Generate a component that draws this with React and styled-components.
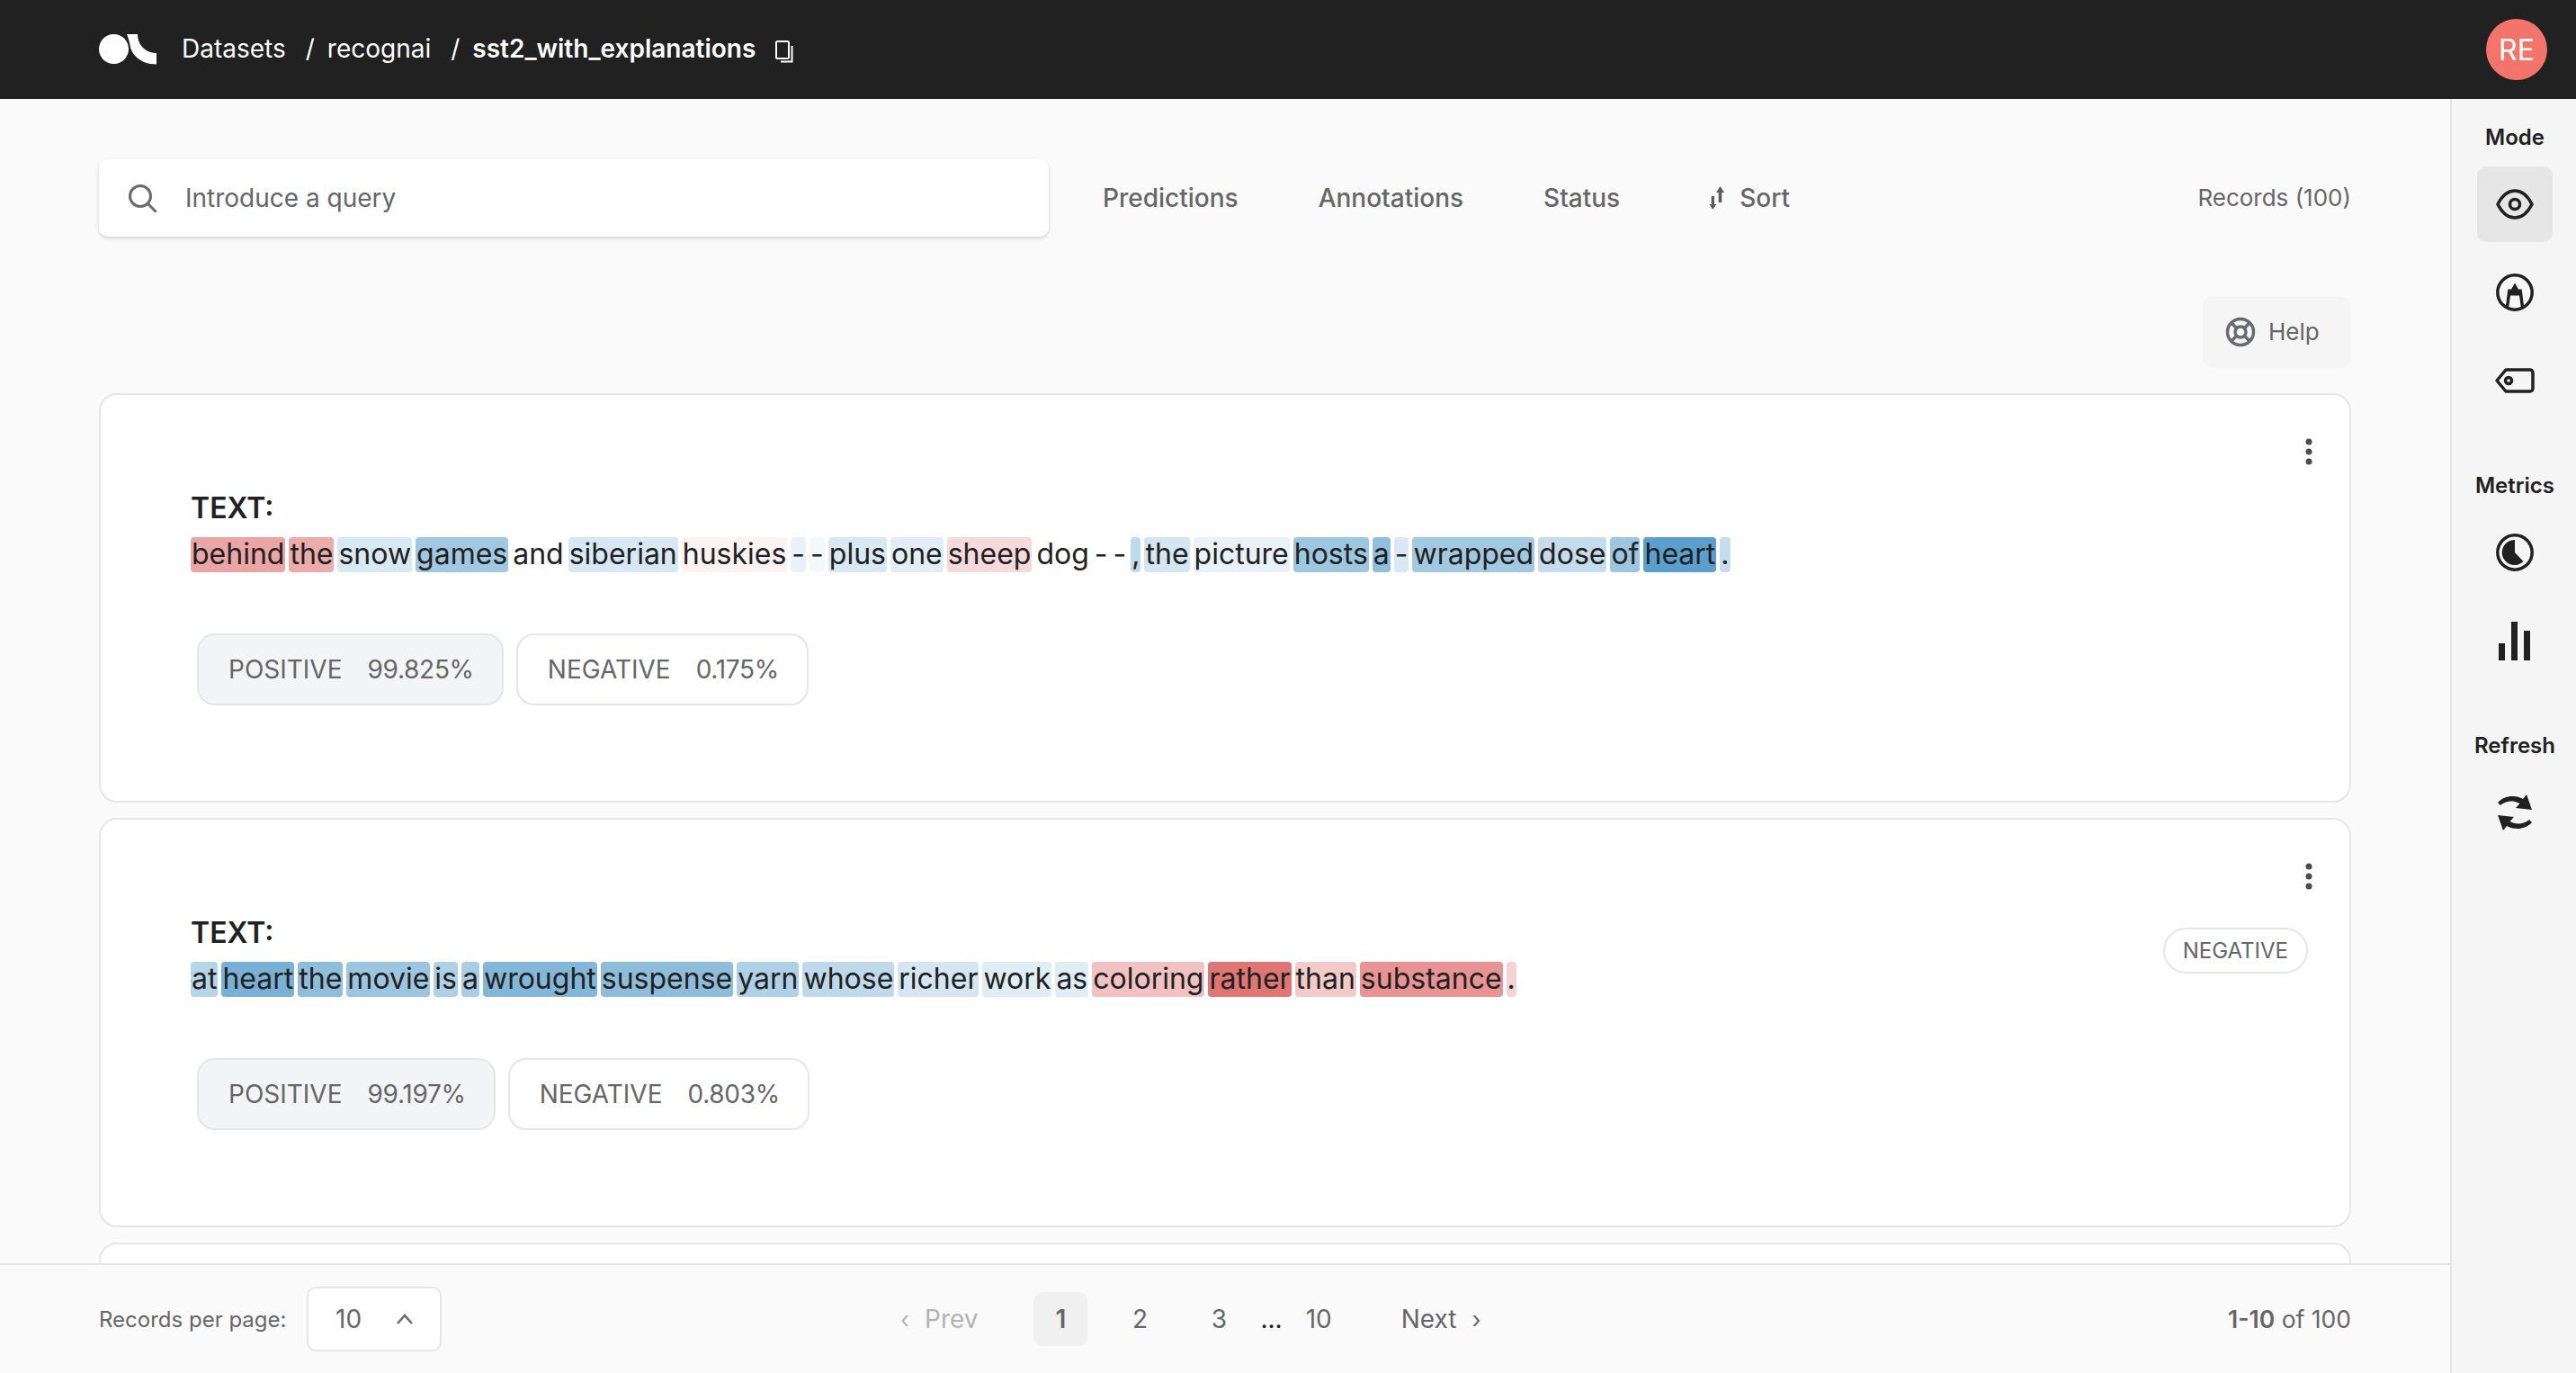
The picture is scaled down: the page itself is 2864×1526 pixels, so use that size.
import React from "react";
import styled, { createGlobalStyle } from "styled-components";

const records = [
  {
    tokens: [
      ["behind", "#eba5a5"], ["the", "#edabab"], ["snow", "#d7e9f3"], ["games", "#a0c8e2"], ["and"],
      ["siberian", "#d6e8f3"], ["huskies", "#fcf2f2"], ["-", "#e9f2f9"], ["-", "#f3f8fb"], ["plus", "#d7e9f3"],
      ["one", "#e1eef5"], ["sheep", "#f6d9da"], ["dog"], ["-"], ["-"], [",", "#bfdaeb"], ["the", "#d3e6f2"],
      ["picture", "#e9f2f9"], ["hosts", "#9cc7e1"], ["a", "#8fbfdc"], ["-", "#d8e9f3"], ["wrapped", "#a2c9e2"],
      ["dose", "#c5dcec"], ["of", "#9dc7e1"], ["heart", "#5a9fcd"], [".", "#c5dcec"],
    ],
    scores: [["POSITIVE", "99.825%"], ["NEGATIVE", "0.175%"]],
  },
  {
    annotation: "NEGATIVE",
    tokens: [
      ["at", "#b6d5e9"], ["heart", "#79b1d6"], ["the", "#8fbedc"], ["movie", "#9cc6e0"], ["is", "#aed1e6"],
      ["a", "#a8cde5"], ["wrought", "#83b7da"], ["suspense", "#8dbddb"], ["yarn", "#aed1e7"], ["whose", "#bdd9eb"],
      ["richer", "#d3e6f2"], ["work", "#dfedf5"], ["as", "#dfedf5"], ["coloring", "#f2c2c2"], ["rather", "#e07674"],
      ["than", "#f3caca"], ["substance", "#e89494"], [".", "#f5d3d5"],
    ],
    scores: [["POSITIVE", "99.197%"], ["NEGATIVE", "0.803%"]],
  },
];

const Logo = () => (
  <svg width="64" height="34" viewBox="110 37 64 34" fill="#fff">
    <ellipse cx="126.5" cy="53.5" rx="16.5" ry="16.5" />
    <path d="M141 37h12c0 12 9 21 21 21v12.5c-18 0-27-11-29-19-1-5-2-10-4-14.5z" />
  </svg>
);

const CopyIcon = () => (
  <svg width="22" height="26" viewBox="0 0 22 26" fill="none" stroke="#fff" strokeWidth="2">
    <rect x="2" y="2" width="14" height="19" rx="1.5" />
    <path d="M19.500 7v17.500H7" />
  </svg>
);

const SearchIcon = () => (
  <svg width="32" height="32" viewBox="0 0 32 32" fill="none" stroke="#686a6d" strokeWidth="3">
    <circle cx="14" cy="14" r="11.500" />
    <path d="M22.500 22.500L31 31" strokeLinecap="round" />
  </svg>
);

const SortIcon = () => (
  <svg width="18" height="26" viewBox="0 0 18 26" fill="#5c5c5c">
    <path d="M12.500 0l4.500 7h-2.700v11h-3.600V7H8z" />
    <path d="M2.700 11h3.300v9h2.300l-3.900 6L.5 20h2.200z" />
  </svg>
);

const HelpIcon = () => (
  <svg width="34" height="34" viewBox="0 0 34 34" fill="none" stroke="#686a6d" strokeWidth="3.500">
    <circle cx="17" cy="17" r="14.500" />
    <circle cx="17" cy="17" r="6" />
    <path d="M6.500 6.500l6.200 6.200M27.500 6.500l-6.200 6.200M6.500 27.500l6.200-6.200M27.500 27.500l-6.200-6.200" />
  </svg>
);

const DotsIcon = () => (
  <svg width="8" height="30" viewBox="0 0 8 30" fill="#4c4c4c">
    <circle cx="4" cy="4" r="3.500" />
    <circle cx="4" cy="15" r="3.500" />
    <circle cx="4" cy="26" r="3.500" />
  </svg>
);

const EyeIcon = () => (
  <svg width="42" height="34" viewBox="0 0 42 34" fill="none" stroke="#212121" strokeWidth="3.500">
    <path d="M2 17C7 7 14 2 21 2s14 5 19 15c-5 10-12 15-19 15S7 27 2 17z" />
    <circle cx="21" cy="17" r="5.500" />
  </svg>
);

const PenIcon = () => (
  <svg width="42" height="42" viewBox="0 0 42 42" fill="none">
    <circle cx="21" cy="21" r="19.200" stroke="#212121" strokeWidth="3.500" />
    <path d="M21 10.500l4 7h3.700l2.300 18.500-3.200 1.500-1.800-13H16l-1.800 13-3.200-1.500 2.300-18.500H17z" fill="#212121" />
  </svg>
);

const TagIcon = () => (
  <svg width="44" height="28" viewBox="0 0 44 28" fill="none" stroke="#212121" strokeWidth="3.500">
    <path d="M12 2h27a3 3 0 0 1 3 3v18a3 3 0 0 1-3 3H12L2 14z" strokeLinejoin="round" />
    <circle cx="15" cy="14" r="3.500" />
  </svg>
);

const PieIcon = () => (
  <svg width="42" height="42" viewBox="0 0 42 42">
    <circle cx="21" cy="21" r="19.200" fill="none" stroke="#212121" strokeWidth="3.500" />
    <path d="M21 7v14l9.500 10A14 14 0 1 1 21 7z" fill="#212121" />
  </svg>
);

const BarsIcon = () => (
  <svg width="36" height="43" viewBox="0 0 36 43" fill="#212121">
    <rect x="0" y="24" width="7" height="19" />
    <rect x="14" y="0" width="7" height="43" />
    <rect x="28" y="10" width="7" height="33" />
  </svg>
);

const RefreshIcon = () => (
  <svg width="40" height="42" viewBox="0 0 40 42" fill="#212121">
    <path d="M1 10C8 2 20 1 29 6l4-5 6 17-18-2 4.500-5C18 7 10 8 4 13z" />
    <path d="M39 32c-7 8-19 9-28 4l-4 5-6-17 18 2-4.500 5C22 35 30 34 36 29z" />
  </svg>
);

const ChevronUp = () => (
  <svg width="20" height="14" viewBox="0 0 20 14" fill="none" stroke="#686a6d" strokeWidth="2.500">
    <path d="M2 12l8-9 8 9" />
  </svg>
);

const App = () => {
  return (
    <Page>
      <GlobalStyle />
      <Header>
        <Logo />
        <Crumbs>
          <Crumb>Datasets</Crumb>
          <Sep>/</Sep>
          <Crumb>recognai</Crumb>
          <Sep>/</Sep>
          <Crumb $current>sst2_with_explanations</Crumb>
          <CopyButton>
            <CopyIcon />
          </CopyButton>
        </Crumbs>
        <Avatar>RE</Avatar>
      </Header>
      <Body>
        <Main>
          <Content>
            <Toolbar>
              <Search>
                <SearchIcon />
                <Placeholder>Introduce a query</Placeholder>
              </Search>
              <Filters>
                <Filter>Predictions</Filter>
                <Filter>Annotations</Filter>
                <Filter>Status</Filter>
                <SortFilter>
                  <SortIcon />
                  Sort
                </SortFilter>
              </Filters>
              <Count>Records (100)</Count>
            </Toolbar>
            <HelpRow>
              <HelpButton>
                <HelpIcon />
                Help
              </HelpButton>
            </HelpRow>
            <Cards>
              {records.map((record, index) => (
                <Card key={index}>
                  <Menu>
                    <DotsIcon />
                  </Menu>
                  {record.annotation && <Annotation>{record.annotation}</Annotation>}
                  <FieldName>TEXT:</FieldName>
                  <Tokens>
                    {record.tokens.map(([word, color], i) => (
                      <Token key={i} $color={color}>
                        {word}
                      </Token>
                    ))}
                  </Tokens>
                  <Scores>
                    {record.scores.map(([label, value], i) => (
                      <Score key={label} $top={i === 0}>
                        <span>{label}</span>
                        <ScoreValue>{value}</ScoreValue>
                      </Score>
                    ))}
                  </Scores>
                </Card>
              ))}
              <Card />
            </Cards>
          </Content>
          <Footer>
            <PerPage>
              Records per page:
              <PerPageSelect>
                10
                <ChevronUp />
              </PerPageSelect>
            </PerPage>
            <Pager>
              <PagerLink $disabled>
                <Arrow>‹</Arrow> Prev
              </PagerLink>
              <PageNumbers>
                <PageNumber $active>1</PageNumber>
                <PageNumber>2</PageNumber>
                <PageNumber>3</PageNumber>
                <Ellipsis>...</Ellipsis>
                <span>10</span>
              </PageNumbers>
              <PagerLink>
                Next <Arrow>›</Arrow>
              </PagerLink>
            </Pager>
            <Range>
              <strong>1-10</strong> of 100
            </Range>
          </Footer>
        </Main>
        <Sidebar>
          <SideGroup>
            <SideTitle>Mode</SideTitle>
            <SideButton $active>
              <EyeIcon />
            </SideButton>
            <SideButton>
              <PenIcon />
            </SideButton>
            <SideButton>
              <TagIcon />
            </SideButton>
          </SideGroup>
          <SideGroup>
            <SideTitle>Metrics</SideTitle>
            <SideButton>
              <PieIcon />
            </SideButton>
            <SideButton>
              <BarsIcon />
            </SideButton>
          </SideGroup>
          <SideGroup>
            <SideTitle>Refresh</SideTitle>
            <SideButton>
              <RefreshIcon />
            </SideButton>
          </SideGroup>
        </Sidebar>
      </Body>
    </Page>
  );
};

export default App;

const GlobalStyle = createGlobalStyle`
  html, body {
    margin: 0;
    padding: 0;
    overflow: hidden;
  }
  * {
    box-sizing: border-box;
  }
`;

const Page = styled.div`
  width: 2864px;
  height: 1526px;
  display: flex;
  flex-direction: column;
  overflow: hidden;
  background: #fafafa;
  color: #212121;
  font-family: Inter, "Liberation Sans", sans-serif;
`;

const Header = styled.header`
  height: 110px;
  flex: none;
  display: flex;
  align-items: center;
  padding: 0 32px 0 110px;
  background: #212121;
  color: #fff;
`;

const Crumbs = styled.nav`
  display: flex;
  align-items: center;
  margin-left: 28px;
  padding-bottom: 3px;
  font-size: 28px;
`;

const Crumb = styled.span`
  font-weight: ${(p) => (p.$current ? 600 : 400)};
`;

const Sep = styled.span`
  margin: 0 14px 0 22px;
`;

const CopyButton = styled.span`
  display: flex;
  margin: 7px 0 0 21px;
`;

const Avatar = styled.div`
  width: 68px;
  height: 68px;
  margin-left: auto;
  border-radius: 50%;
  background: #f2746a;
  display: flex;
  align-items: center;
  justify-content: center;
  font-size: 32px;
`;

const Body = styled.div`
  flex: 1;
  min-height: 0;
  display: flex;
`;

const Main = styled.main`
  flex: 1;
  min-width: 0;
  display: flex;
  flex-direction: column;
`;

const Content = styled.div`
  flex: 1;
  min-height: 0;
  overflow: hidden;
  padding: 67px 110px 0;
`;

const Toolbar = styled.div`
  display: flex;
  align-items: center;
  height: 86px;
`;

const Search = styled.div`
  width: 1056px;
  height: 86px;
  display: flex;
  align-items: center;
  gap: 32px;
  padding-left: 32px;
  background: #fff;
  border-radius: 10px;
  box-shadow: 0 2px 4px rgba(0, 0, 0, 0.16);
`;

const Placeholder = styled.span`
  font-size: 28px;
  color: #666;
`;

const Filters = styled.div`
  display: flex;
  align-items: center;
  gap: 89px;
  margin-left: 60px;
  padding-bottom: 1px;
`;

const Filter = styled.span`
  font-size: 28px;
  font-weight: 500;
  color: #666;
`;

const SortFilter = styled(Filter)`
  display: flex;
  align-items: center;
  gap: 16px;
  margin-left: 10px;
`;

const Count = styled.span`
  margin-left: auto;
  padding-bottom: 2px;
  font-size: 26px;
  color: #666;
`;

const HelpRow = styled.div`
  display: flex;
  justify-content: flex-end;
  margin: 66px 0 28px;
`;

const HelpButton = styled.div`
  width: 165px;
  height: 80px;
  display: flex;
  align-items: center;
  gap: 14px;
  padding: 0 0 1px 25px;
  background: #f5f5f5;
  border-radius: 12px;
  font-size: 26px;
  color: #666;
`;

const Cards = styled.div`
  display: flex;
  flex-direction: column;
  gap: 17px;
`;

const Card = styled.article`
  position: relative;
  flex: none;
  height: 455px;
  padding: 106px 100px 0;
  background: #fff;
  border: 2px solid #e6e6e6;
  border-radius: 20px;
`;

const Menu = styled.div`
  position: absolute;
  top: 48px;
  right: 41px;
  display: flex;
`;

const Annotation = styled.div`
  position: absolute;
  top: 120px;
  right: 46px;
  height: 51px;
  padding: 0 20px;
  display: flex;
  align-items: center;
  background: #fff;
  border: 2px solid #e6e6e6;
  border-radius: 26px;
  font-size: 24px;
  color: #666;
`;

const FieldName = styled.div`
  height: 40px;
  line-height: 40px;
  font-size: 32px;
  font-weight: 600;
`;

const Tokens = styled.div`
  display: flex;
  flex-wrap: wrap;
  column-gap: 4px;
  margin-top: 12px;
`;

const Token = styled.span`
  height: 39px;
  line-height: 37px;
  padding: 0 1px;
  font-size: 32px;
  border-radius: 4px;
  background: ${(p) => p.$color || "transparent"};
`;

const Scores = styled.div`
  display: flex;
  gap: 14px;
  margin: 68px 0 0 7px;
`;

const Score = styled.div`
  height: 80px;
  display: flex;
  align-items: center;
  gap: 28px;
  padding: 0 31px 0 33px;
  border: 2px solid #e6e6e6;
  border-radius: 20px;
  background: ${(p) => (p.$top ? "#f3f4f6" : "#fff")};
  font-size: 28px;
  color: #666;
`;

const ScoreValue = styled.span`
  letter-spacing: -0.3px;
`;

const Footer = styled.footer`
  height: 122px;
  flex: none;
  display: flex;
  align-items: center;
  position: relative;
  padding: 0 110px;
  background: #fafafa;
  border-top: 2px solid #e6e6e6;
  color: #666;
`;

const PerPage = styled.div`
  width: 381px;
  flex: none;
  display: flex;
  align-items: center;
  justify-content: space-between;
  font-size: 24px;
  white-space: nowrap;
`;

const PerPageSelect = styled.div`
  width: 150px;
  height: 72px;
  flex: none;
  display: flex;
  align-items: center;
  justify-content: space-between;
  padding: 0 29px 0 30px;
  background: #fff;
  border: 2px solid #e6e6e6;
  border-radius: 10px;
  font-size: 28px;
`;

const Pager = styled.div`
  display: flex;
  align-items: center;
  margin-left: 510px;
  font-size: 28px;
`;

const PagerLink = styled.span`
  display: flex;
  align-items: center;
  gap: 17px;
  color: ${(p) => (p.$disabled ? "#b3b3b3" : "#666")};
`;

const Arrow = styled.span`
  font-size: 26px;
`;

const PageNumbers = styled.div`
  display: flex;
  align-items: center;
  gap: 28px;
  margin: 0 77px 0 62px;
`;

const PageNumber = styled.span`
  width: 60px;
  height: 60px;
  display: flex;
  align-items: center;
  justify-content: center;
  border-radius: 10px;
  background: ${(p) => (p.$active ? "#f0f0f0" : "transparent")};
  font-weight: ${(p) => (p.$active ? 600 : 400)};
`;

const Ellipsis = styled.span`
  color: #212121;
  margin: 0 -2px 0 -12px;
`;

const Range = styled.div`
  margin-left: auto;
  font-size: 26.5px;

  strong {
    font-weight: 600;
  }
`;

const Sidebar = styled.aside`
  width: 140px;
  flex: none;
  display: flex;
  flex-direction: column;
  padding: 28px 0 0 2px;
  background: #f5f5f5;
  border-left: 2px solid #e6e6e6;
`;

const SideGroup = styled.section`
  display: flex;
  flex-direction: column;
  align-items: center;
  margin-bottom: 46px;
`;

const SideTitle = styled.h3`
  margin: 0 0 17px;
  font-size: 24px;
  line-height: 30px;
  font-weight: 600;
`;

const SideButton = styled.div`
  width: 84px;
  height: 84px;
  margin-bottom: 14px;
  display: flex;
  align-items: center;
  justify-content: center;
  border-radius: 10px;
  background: ${(p) => (p.$active ? "#e6e6e6" : "transparent")};
`;
